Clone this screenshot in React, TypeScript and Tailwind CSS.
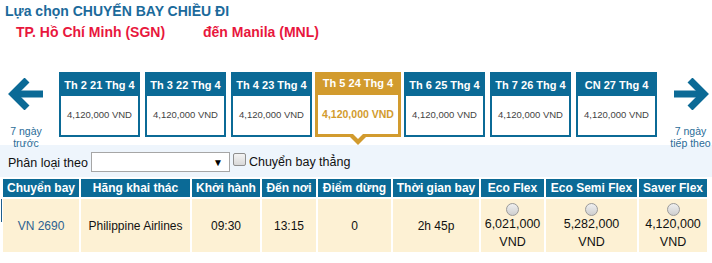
const dates = [
  { label: 'Th 2 21 Thg 4', price: '4,120,000 VND' },
  { label: 'Th 3 22 Thg 4', price: '4,120,000 VND' },
  { label: 'Th 4 23 Thg 4', price: '4,120,000 VND' },
  { label: 'Th 5 24 Thg 4', price: '4,120,000 VND', selected: true },
  { label: 'Th 6 25 Thg 4', price: '4,120,000 VND' },
  { label: 'Th 7 26 Thg 4', price: '4,120,000 VND' },
  { label: 'CN 27 Thg 4', price: '4,120,000 VND' },
];

const fares = ['6,021,000', '5,282,000', '4,120,000'];

function Arrow({ dir }: { dir: 'left' | 'right' }) {
  return (
    <svg width="36" height="32" viewBox="0 0 36 32" className={dir === 'right' ? 'rotate-180' : ''}>
      <path d="M4 16 H35" stroke="#0b6a96" strokeWidth="7" fill="none" />
      <path d="M19 2 L5 16 L19 30" stroke="#0b6a96" strokeWidth="7" fill="none" strokeLinejoin="miter" />
    </svg>
  );
}

function DateCard({ label, price, selected }: { label: string; price: string; selected?: boolean }) {
  if (selected) {
    return (
      <div className="relative mx-[3px] flex w-[86px] flex-col whitespace-nowrap">
        <div className="flex h-[23px] items-center justify-center bg-[#d29b2e] text-[11px] font-bold text-white">
          {label}
        </div>
        <div className="flex h-[42px] items-center justify-center border-[3px] border-t-0 border-[#d29b2e] bg-white text-[10.5px] font-bold text-[#d29b2e]">
          {price}
        </div>
        <div className="absolute left-[34px] top-[64px] h-0 w-0 border-x-[9px] border-t-[9px] border-x-transparent border-t-[#d29b2e]" />
        <div className="absolute left-[38px] top-[62px] h-0 w-0 border-x-[5px] border-t-[5px] border-x-transparent border-t-white" />
      </div>
    );
  }
  return (
    <div className="flex w-[81px] flex-col whitespace-nowrap border-2 border-[#0b6a96]">
      <div className="flex h-[22px] items-center justify-center bg-[#0b6a96] text-[11px] font-bold text-white">
        {label}
      </div>
      <div className="flex h-[39px] items-center justify-center bg-white text-[9.5px] text-[#444]">{price}</div>
    </div>
  );
}

export default function App() {
  return (
    <div className="h-[263px] w-[712px] overflow-hidden bg-white" style={{ fontFamily: '"Liberation Sans", Arial, sans-serif' }}>
      {/* Tiêu đề */}
      <div className="pl-[5px] pt-[3px] text-[14px] font-bold leading-[16px] text-[#1b6a9b]">Lựa chọn CHUYẾN BAY CHIỀU ĐI</div>
      <div className="mt-[5px] flex text-[14px] font-bold leading-[17px] text-[#e8173d]">
        <span className="ml-[16px] w-[187px]">TP. Hồ Chí Minh (SGN)</span>
        <span>đến Manila (MNL)</span>
      </div>

      {/* Chọn ngày */}
      <div className="mt-[31px] flex h-[73px] items-start">
        <div className="flex w-[57px] flex-col items-center pr-[5px] pt-[6px]">
          <Arrow dir="left" />
          <div className="mt-[15px] text-center text-[10.5px] leading-[12px] text-[#2a6c98]">
            7 ngày
            <br />
            trước
          </div>
        </div>
        <div className="ml-[2px] flex">
          {dates.map((d, i) => (
            <div key={i} className={d.selected || dates[i + 1]?.selected ? '' : i < dates.length - 1 ? 'mr-[5px]' : ''}>
              <DateCard {...d} />
            </div>
          ))}
        </div>
        <div className="flex flex-1 flex-col items-center pl-[12px] pt-[6px]">
          <Arrow dir="right" />
          <div className="mt-[15px] whitespace-nowrap text-center text-[10.5px] leading-[12px] text-[#2a6c98]">
            7 ngày
            <br />
            tiếp theo
          </div>
        </div>
      </div>

      {/* Bộ lọc */}
      <div className="flex h-[32px] items-start bg-[#eef5fc] pl-[8px] pt-[7px] text-[12.5px] text-[#111]">
        <span className="mt-[2px]">Phân loại theo</span>
        <div className="ml-[3px] flex h-[20px] w-[139px] items-center justify-end border border-[#a6a6a6] bg-white pr-[6px] text-[10px] text-black">
          ▼
        </div>
        <span className="ml-[3px] mt-[1px] h-[13px] w-[13px] rounded-[2px] border border-[#8f8f8f] bg-gradient-to-b from-[#f4f4f4] to-[#d8d8d8]" />
        <span className="ml-[3px] mt-[1px]">Chuyển bay thẳng</span>
      </div>

      {/* Bảng chuyến bay */}
      <table className="ml-[1px] border-separate border-spacing-[2px] text-center" style={{ tableLayout: 'fixed' }}>
        <colgroup>
          <col className="w-[76px]" />
          <col className="w-[109px]" />
          <col className="w-[68px]" />
          <col className="w-[54px]" />
          <col className="w-[73px]" />
          <col className="w-[86px]" />
          <col className="w-[63px]" />
          <col className="w-[91px]" />
          <col className="w-[68px]" />
        </colgroup>
        <thead>
          <tr className="h-[18px] bg-[#0b6a96] text-[12px] font-bold leading-[14px] text-white">
            <th className="p-0">Chuyển bay</th>
            <th className="p-0">Hãng khai thác</th>
            <th className="p-0">Khởi hành</th>
            <th className="p-0">Đến nơi</th>
            <th className="p-0">Điểm dừng</th>
            <th className="p-0">Thời gian bay</th>
            <th className="p-0">Eco Flex</th>
            <th className="p-0">Eco Semi Flex</th>
            <th className="p-0">Saver Flex</th>
          </tr>
        </thead>
        <tbody>
          <tr className="h-[53px] bg-[#fdf1d4] text-[12px] text-[#111]">
            <td className="relative p-0 text-[#2d6290]">
              <span className="absolute left-[-2px] top-0 h-[23px] w-[1px] bg-[#1f5f8c]" />
              VN 2690
            </td>
            <td className="p-0">Philippine Airlines</td>
            <td className="p-0">09:30</td>
            <td className="p-0">13:15</td>
            <td className="p-0">0</td>
            <td className="p-0">2h 45p</td>
            {fares.map((f) => (
              <td key={f} className="p-0 align-top">
                <div className="flex flex-col items-center pt-[4px] leading-[18px]">
                  <span className="h-[13px] w-[13px] rounded-full border border-[#9a9a9a] bg-gradient-to-b from-[#efefef] to-[#cfcfcf]" />
                  <span className="mt-[-1px] text-[12.5px]">{f}</span>
                  <span className="text-[12.5px]">VND</span>
                </div>
              </td>
            ))}
          </tr>
        </tbody>
      </table>
    </div>
  );
}
